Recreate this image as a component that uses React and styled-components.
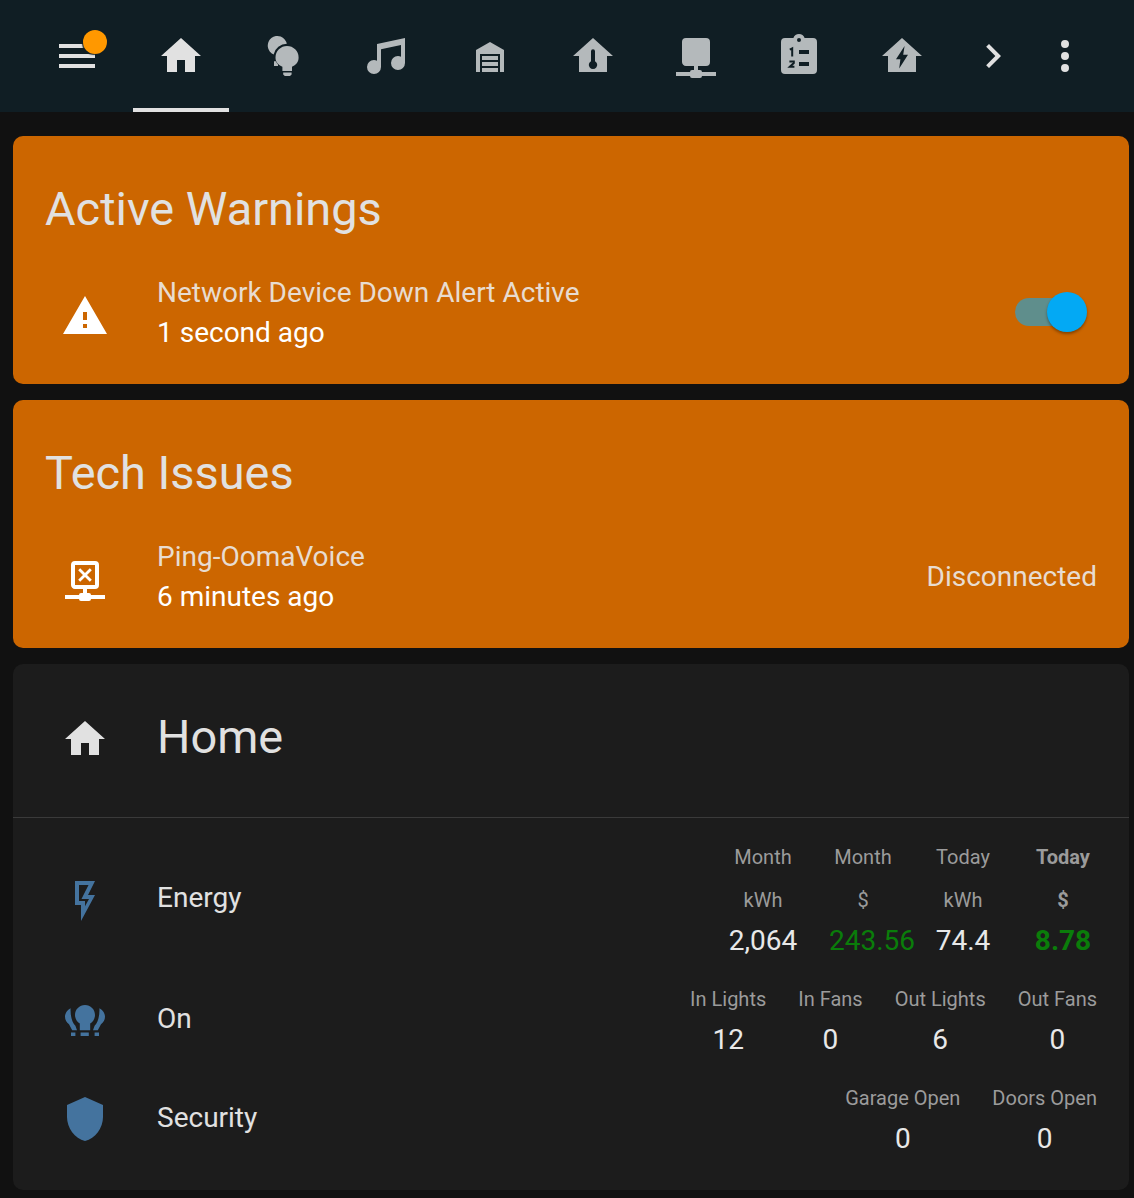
import React from "react";
import styled, { createGlobalStyle } from "styled-components";

const GlobalStyle = createGlobalStyle`
  html, body {
    margin: 0;
    background: #111111;
    font-family: Roboto, "Liberation Sans", sans-serif;
    color: #e1e1e1;
  }
  * { box-sizing: border-box; }
`;

// mdi style paths, all on a 24 box
const icons = {
  menu: "M3,6H21V8H3V6M3,11H21V13H3V11M3,16H21V18H3V16Z",
  home: "M10,20V14H14V20H19V12H22L12,3L2,12H5V20H10Z",
  bulbs:
    "M13.4,5.9A4.8,4.8 0 1,0 6.8,11.2A6.9,6.9 0 0,1 13.4,5.9ZM7,14.6H7.9C8.2,15.3 8.5,15.8 9,16.3V17H7ZM13.5,7A5.75,5.75 0 0,0 7.75,12.75C7.75,15 9.2,16.6 11.2,17.4V19.5H16V17.4C18,16.6 19.3,15 19.3,12.75A5.75,5.75 0 0,0 13.5,7ZM11.6,20.3H15.8V21.2L15,22H12.4L11.6,21.2Z",
  music:
    "M21,3V15.5A3.5,3.5 0 0,1 17.5,19A3.5,3.5 0 0,1 14,15.5A3.5,3.5 0 0,1 17.5,12C18.04,12 18.55,12.12 19,12.34V6.47L9,8.6V17.5A3.5,3.5 0 0,1 5.5,21A3.5,3.5 0 0,1 2,17.5A3.5,3.5 0 0,1 5.5,14C6.04,14 6.55,14.12 7,14.34V6L21,3Z",
  garage:
    "M19,20H17V11H7V20H5V9L12,5L19,9V20M8,12H16V14H8V12M8,15H16V17H8V15M16,18V20H8V18H16Z",
  homeThermo:
    "M12,3L2,12H5V20H19V12H22L12,3ZM11,9.6A1,1 0 0,1 13,9.6V14.6A2.1,2.1 0 1,1 11,14.6V9.6Z",
  network:
    "M17,3A2,2 0 0,1 19,5V15A2,2 0 0,1 17,17H13V19H14A1,1 0 0,1 15,20H22V22H15A1,1 0 0,1 14,23H10A1,1 0 0,1 9,22H2V20H9A1,1 0 0,1 10,19H11V17H7C5.89,17 5,16.1 5,15V5A2,2 0 0,1 7,3H17Z",
  clipboard:
    "M5,3H9.2C9.6,1.8 10.7,1 12,1C13.3,1 14.4,1.8 14.8,3H19A2,2 0 0,1 21,5V19A2,2 0 0,1 19,21H5A2,2 0 0,1 3,19V5A2,2 0 0,1 5,3ZM12,3A1,1 0 1,0 12,5A1,1 0 1,0 12,3ZM12,9V11H17V9H12ZM12,15V17H17V15H12Z",
  homeBolt:
    "M12,3L2,12H5V20H19V12H22L12,3ZM13.3,7L9,13.6H11.2L10.6,18.2L15,11.4H12.6L13.3,7Z",
  chevron: "M8.59,16.58L13.17,12L8.59,7.41L10,6L16,12L10,18L8.59,16.58Z",
  dots:
    "M12,16A2,2 0 0,1 14,18A2,2 0 0,1 12,20A2,2 0 0,1 10,18A2,2 0 0,1 12,16M12,10A2,2 0 0,1 14,12A2,2 0 0,1 12,14A2,2 0 0,1 10,12A2,2 0 0,1 12,10M12,4A2,2 0 0,1 14,6A2,2 0 0,1 12,8A2,2 0 0,1 10,6A2,2 0 0,1 12,4Z",
  alert: "M13,14H11V10H13M13,18H11V16H13M1,21H23L12,2L1,21Z",
  networkX:
    "M17,3A2,2 0 0,1 19,5V15A2,2 0 0,1 17,17H13V19H14A1,1 0 0,1 15,20H22V22H15A1,1 0 0,1 14,23H10A1,1 0 0,1 9,22H2V20H9A1,1 0 0,1 10,19H11V17H7C5.89,17 5,16.1 5,15V5A2,2 0 0,1 7,3H17ZM7,5V15H17V5H7ZM9.6,6.6L12,9L14.4,6.6L15.4,7.6L13,10L15.4,12.4L14.4,13.4L12,11L9.6,13.4L8.6,12.4L11,10L8.6,7.6L9.6,6.6Z",
  flash:
    "M7,2H17L13.5,9H17L10,22V14H7V2M9,4V12H12V14.66L14,11H10.24L13.76,4H9Z",
  bulbGroup:
    "M12,5C9.2,5 7,7.2 7,10C7,11.8 8,13.4 9.4,14.3V17.6H14.6V14.3C16,13.4 17,11.8 17,10C17,7.2 14.8,5 12,5ZM4.8,6.6C3.2,7.4 2,9 2,10.9C2,12.4 2.8,13.7 4,14.6L5.6,17.6H8L7.2,15.4C5.5,13.8 4.6,10.2 4.8,6.6ZM19.2,6.6C19.4,10.2 18.5,13.8 16.8,15.4L16,17.6H18.4L20,14.6C21.2,13.7 22,12.4 22,10.9C22,9 20.8,7.4 19.2,6.6ZM5,18.7V20.5H7.2V18.7H5ZM9.8,18.7V20.5H13.9V18.7H9.8ZM16.8,18.7V20.5H19V18.7H16.8Z",
  shield:
    "M12,1L3,5V11C3,16.55 6.84,21.74 12,23C17.16,21.74 21,16.55 21,11V5L12,1Z",
};

const Svg = styled.svg`
  display: block;
  width: 48px;
  height: 48px;
  flex: none;
  fill: ${(p) => p.$color || "currentColor"};
`;

const Icon = ({ name, color, children }) => (
  <Svg viewBox="0 0 24 24" $color={color} aria-hidden="true">
    <path d={icons[name]} fillRule="evenodd" />
    {children}
  </Svg>
);

const Page = styled.div`
  width: 1134px;
  min-height: 1198px;
  background: #111111;
`;

const Header = styled.header`
  height: 112px;
  background: #101e24;
  display: flex;
  padding-left: 53px;
`;

const HeaderButton = styled.div`
  position: relative;
  width: 48px;
  padding-top: 32px;
  margin-left: ${(p) => p.$gap || 0}px;
  color: #e1e1e1;
`;

const Badge = styled.span`
  position: absolute;
  left: 30px;
  top: 30px;
  width: 24px;
  height: 24px;
  border-radius: 50%;
  background: #ff9800;
  box-shadow: -1px 1px 1px rgba(16, 30, 36, 0.9);
`;

const Tabs = styled.nav`
  display: flex;
  gap: 7px;
  margin-left: 32px;
`;

const Tab = styled.div`
  width: 96px;
  height: 112px;
  padding-top: 32px;
  display: flex;
  justify-content: center;
  color: ${(p) => (p.$active ? "#e1e1e1" : "#b4b9bb")};
  border-bottom: 4px solid ${(p) => (p.$active ? "#e1e1e1" : "transparent")};
`;

const Content = styled.main`
  padding: 24px 5px 8px 13px;
  display: flex;
  flex-direction: column;
  gap: 16px;
`;

const Card = styled.section`
  border-radius: 10px;
  background: ${(p) => (p.$warn ? "#cc6600" : "#1c1c1c")};
`;

const AlertCard = styled(Card)`
  height: 248px;
  padding: 0 32px;
`;

const CardTitle = styled.h1`
  margin: 0;
  height: 136px;
  padding-top: 41px;
  font-size: 46.9px;
  font-weight: 400;
  line-height: 64px;
`;

const Row = styled.div`
  display: flex;
  align-items: center;
  height: 80px;
`;

const IconSlot = styled.div`
  width: 80px;
  margin-right: 32px;
  padding-top: ${(p) => p.$drop || 0}px;
  display: flex;
  justify-content: center;
  color: ${(p) => p.$color || "#ffffff"};
`;

const RowText = styled.div`
  flex: 1;
  padding-top: 2px;
  font-size: 28px;
  line-height: 40px;
`;

const Primary = styled.div`
  color: #e8dcd0;
`;

const Secondary = styled.div`
  color: #ffffff;
`;

const RowValue = styled.div`
  font-size: 28px;
  color: #e8dcd0;
`;

const Switch = styled.div`
  position: relative;
  width: 72px;
  height: 40px;
  margin-right: 10px;
  display: flex;
  align-items: center;
`;

const Track = styled.div`
  width: 60px;
  height: 28px;
  border-radius: 14px;
  background: #5f8e8c;
`;

const Knob = styled.div`
  position: absolute;
  right: 0;
  top: 0;
  width: 40px;
  height: 40px;
  border-radius: 50%;
  background: #03a9f4;
  box-shadow: 0 2px 3px rgba(0, 0, 0, 0.35);
`;

const HomeCard = styled(Card)`
  padding-bottom: 32px;
`;

const HomeHeader = styled.div`
  height: 154px;
  padding: 0 32px 7px;
  display: flex;
  align-items: center;
  border-bottom: 1px solid #3a3a3a;
`;

const HomeTitle = styled.h2`
  margin: 0;
  font-size: 46.9px;
  font-weight: 400;
  line-height: 64px;
`;

const HomeBody = styled.div`
  padding: 19px 32px 0;
  display: flex;
  flex-direction: column;
  gap: 19px;
`;

const EntityRow = styled.div`
  display: flex;
  align-items: center;
`;

const EntityName = styled.div`
  flex: 1;
  padding-bottom: ${(p) => p.$lift || 0}px;
  font-size: 28px;
  line-height: 40px;
  color: #e1e1e1;
`;

const Stats = styled.div`
  display: flex;
  gap: 32px;
`;

const Stat = styled.div`
  text-align: center;
  white-space: nowrap;
`;

const EnergyGrid = styled.div`
  display: grid;
  grid-template-columns: repeat(4, 100px);
  margin-right: -16px;
  text-align: center;
  white-space: nowrap;
`;

const StatLabel = styled.div`
  font-size: 20px;
  line-height: 40px;
  color: #9b9b9b;
  font-weight: ${(p) => (p.$bold ? 700 : 400)};
  margin-bottom: ${(p) => p.$space || 0}px;
`;

const StatValue = styled.div`
  font-size: 28px;
  line-height: 40px;
  margin: 1px 0 -1px;
  color: ${(p) => (p.$green ? "#0a7d0a" : "#e8e8e8")};
  font-weight: ${(p) => (p.$bold ? 700 : 400)};
  padding-left: ${(p) => p.$shift || 0}px;
`;

const energy = [
  { top: "Month", unit: "kWh", value: "2,064" },
  { top: "Month", unit: "$", value: "243.56", green: true, shift: 16 },
  { top: "Today", unit: "kWh", value: "74.4" },
  { top: "Today", unit: "$", value: "8.78", green: true, bold: true },
];

const tabs = ["home", "bulbs", "music", "garage", "homeThermo", "network", "clipboard", "homeBolt"];

const ClipboardDigits = () => (
  <g fill="none" stroke="#101e24" strokeWidth="1">
    <path d="M7.4,8.8L8.6,8.2V12.2" />
    <path d="M7.2,14.8H9.4V15.5L7.4,17.4H9.7" />
  </g>
);

const App = () => {
  return (
    <Page>
      <GlobalStyle />
      <Header>
        <HeaderButton>
          <Icon name="menu" />
          <Badge />
        </HeaderButton>
        <Tabs>
          {tabs.map((name, i) => (
            <Tab key={name} $active={i === 0}>
              <Icon name={name}>{name === "clipboard" && <ClipboardDigits />}</Icon>
            </Tab>
          ))}
        </Tabs>
        <HeaderButton $gap={19}>
          <Icon name="chevron" />
        </HeaderButton>
        <HeaderButton $gap={24}>
          <Icon name="dots" />
        </HeaderButton>
      </Header>
      <Content>
        <AlertCard $warn>
          <CardTitle>Active Warnings</CardTitle>
          <Row>
            <IconSlot $drop={8}>
              <Icon name="alert" />
            </IconSlot>
            <RowText>
              <Primary>Network Device Down Alert Active</Primary>
              <Secondary>1 second ago</Secondary>
            </RowText>
            <Switch>
              <Track />
              <Knob />
            </Switch>
          </Row>
        </AlertCard>
        <AlertCard $warn>
          <CardTitle>Tech Issues</CardTitle>
          <Row>
            <IconSlot $drop={6}>
              <Icon name="networkX" />
            </IconSlot>
            <RowText>
              <Primary>Ping-OomaVoice</Primary>
              <Secondary>6 minutes ago</Secondary>
            </RowText>
            <RowValue>Disconnected</RowValue>
          </Row>
        </AlertCard>
        <HomeCard>
          <HomeHeader>
            <IconSlot $color="#e1e1e1" $drop={4}>
              <Icon name="home" />
            </IconSlot>
            <HomeTitle>Home</HomeTitle>
          </HomeHeader>
          <HomeBody>
            <EntityRow>
              <IconSlot $color="#44739e" $drop={4}>
                <Icon name="flash" />
              </IconSlot>
              <EntityName $lift={2}>Energy</EntityName>
              <EnergyGrid>
                {energy.map((c, i) => (
                  <Stat key={i}>
                    <StatLabel $bold={c.bold} $space={3}>{c.top}</StatLabel>
                    <StatLabel $bold={c.bold}>{c.unit}</StatLabel>
                    <StatValue $green={c.green} $bold={c.bold} $shift={c.shift}>{c.value}</StatValue>
                  </Stat>
                ))}
              </EnergyGrid>
            </EntityRow>
            <EntityRow>
              <IconSlot $color="#44739e">
                <Icon name="bulbGroup" />
              </IconSlot>
              <EntityName>On</EntityName>
              <Stats>
                <Stat><StatLabel>In Lights</StatLabel><StatValue>12</StatValue></Stat>
                <Stat><StatLabel>In Fans</StatLabel><StatValue>0</StatValue></Stat>
                <Stat><StatLabel>Out Lights</StatLabel><StatValue>6</StatValue></Stat>
                <Stat><StatLabel>Out Fans</StatLabel><StatValue>0</StatValue></Stat>
              </Stats>
            </EntityRow>
            <EntityRow>
              <IconSlot $color="#44739e" $drop={2}>
                <Icon name="shield" />
              </IconSlot>
              <EntityName>Security</EntityName>
              <Stats>
                <Stat><StatLabel>Garage Open</StatLabel><StatValue>0</StatValue></Stat>
                <Stat><StatLabel>Doors Open</StatLabel><StatValue>0</StatValue></Stat>
              </Stats>
            </EntityRow>
          </HomeBody>
        </HomeCard>
      </Content>
    </Page>
  );
};

export default App;
